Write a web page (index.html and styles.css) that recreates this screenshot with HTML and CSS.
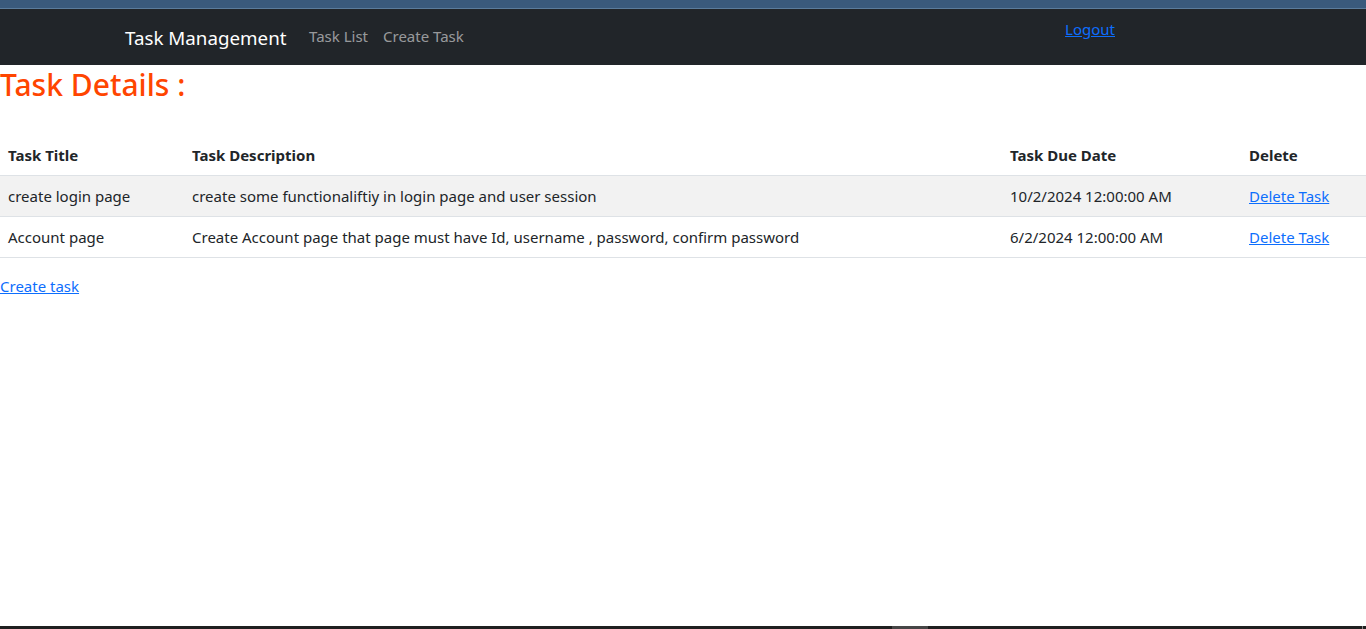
FILE: index.html
```html
<!DOCTYPE html>
<html lang="en">
<head>
<meta charset="utf-8">
<title>Task Management</title>
<link rel="stylesheet" href="styles.css">
</head>
<body>
<div class="topstrip"></div>
<nav class="navbar">
  <div class="container">
    <a class="brand" href="#">Task Management</a>
    <ul class="nav">
      <li><a class="nav-link" href="#">Task List</a></li>
      <li><a class="nav-link" href="#">Create Task</a></li>
    </ul>
    <a class="logout" href="#">Logout</a>
  </div>
</nav>
<main>
  <h2 class="title">Task Details :</h2>
  <table class="table">
    <thead>
      <tr>
        <th class="c-title">Task Title</th>
        <th class="c-desc">Task Description</th>
        <th class="c-date">Task Due Date</th>
        <th class="c-del">Delete</th>
      </tr>
    </thead>
    <tbody>
      <tr class="odd">
        <td>create login page</td>
        <td>create some functionaliftiy in login page and user session</td>
        <td>10/2/2024 12:00:00 AM</td>
        <td><a href="#">Delete Task</a></td>
      </tr>
      <tr>
        <td>Account page</td>
        <td>Create Account page that page must have Id, username , password, confirm password</td>
        <td>6/2/2024 12:00:00 AM</td>
        <td><a href="#">Delete Task</a></td>
      </tr>
    </tbody>
  </table>
  <a class="create" href="#">Create task</a>
</main>
<div class="bottomstrip"><span class="thumb"></span><span class="tick"></span></div>
</body>
</html>
```
FILE: styles.css
```css
* { box-sizing: border-box; }
html, body { margin: 0; padding: 0; }
body {
  font-family: "Noto Sans", "Open Sans", sans-serif;
  font-size: 15px;
  line-height: 24px;
  color: #212529;
  background: #fff;
}
a { color: #0d6efd; }
.topstrip {
  height: 9px;
  background: #3a5a7c;
  border-bottom: 1px solid #5b7c9c;
}
.navbar {
  background: #212529;
  height: 56px;
  padding: 8px 0;
}
.container {
  width: 1140px;
  margin: 0 auto;
  padding: 0 12px;
  display: flex;
  align-items: flex-start;
}
.brand {
  color: #fff;
  text-decoration: none;
  font-size: 18.75px;
  line-height: 30px;
  padding: 6px 0 4px;
  margin-right: 15px;
}
.nav {
  list-style: none;
  margin: 0;
  padding: 0;
  display: flex;
  flex-grow: 1;
}
.nav-link {
  display: block;
  padding: 7px 7.5px 9px;
  color: rgba(255,255,255,0.55);
  text-decoration: none;
  line-height: 24px;
}
.logout {
  margin-right: 126px;
  color: #0d6efd;
  line-height: 24px;
}
.title {
  color: orangered;
  font-size: 30px;
  line-height: 40px;
  font-weight: 500;
  margin: 0 0 30px;
}
.table {
  width: 100%;
  border-collapse: collapse;
  margin-bottom: 16px;
  table-layout: fixed;
}
.table th, .table td {
  text-align: left;
  padding: 8px;
  border-bottom: 1px solid #dee2e6;
  vertical-align: top;
}
.table th { font-weight: 700; }
.c-title { width: 184px; }
.c-desc { width: 818px; }
.c-date { width: 239px; }
.c-del { width: 125px; }
.odd td { background: #f2f2f2; }
.create { display: inline-block; }
.bottomstrip {
  position: fixed;
  left: 0; right: 0; bottom: 0;
  height: 3px;
  background: #1f1f1f;
}
.thumb {
  position: absolute;
  left: 892px;
  width: 36px;
  top: 0; bottom: 0;
  background: #464646;
}
.tick {
  position: absolute;
  right: 3px;
  width: 1px;
  top: 0; bottom: 0;
  background: #888;
}
```
